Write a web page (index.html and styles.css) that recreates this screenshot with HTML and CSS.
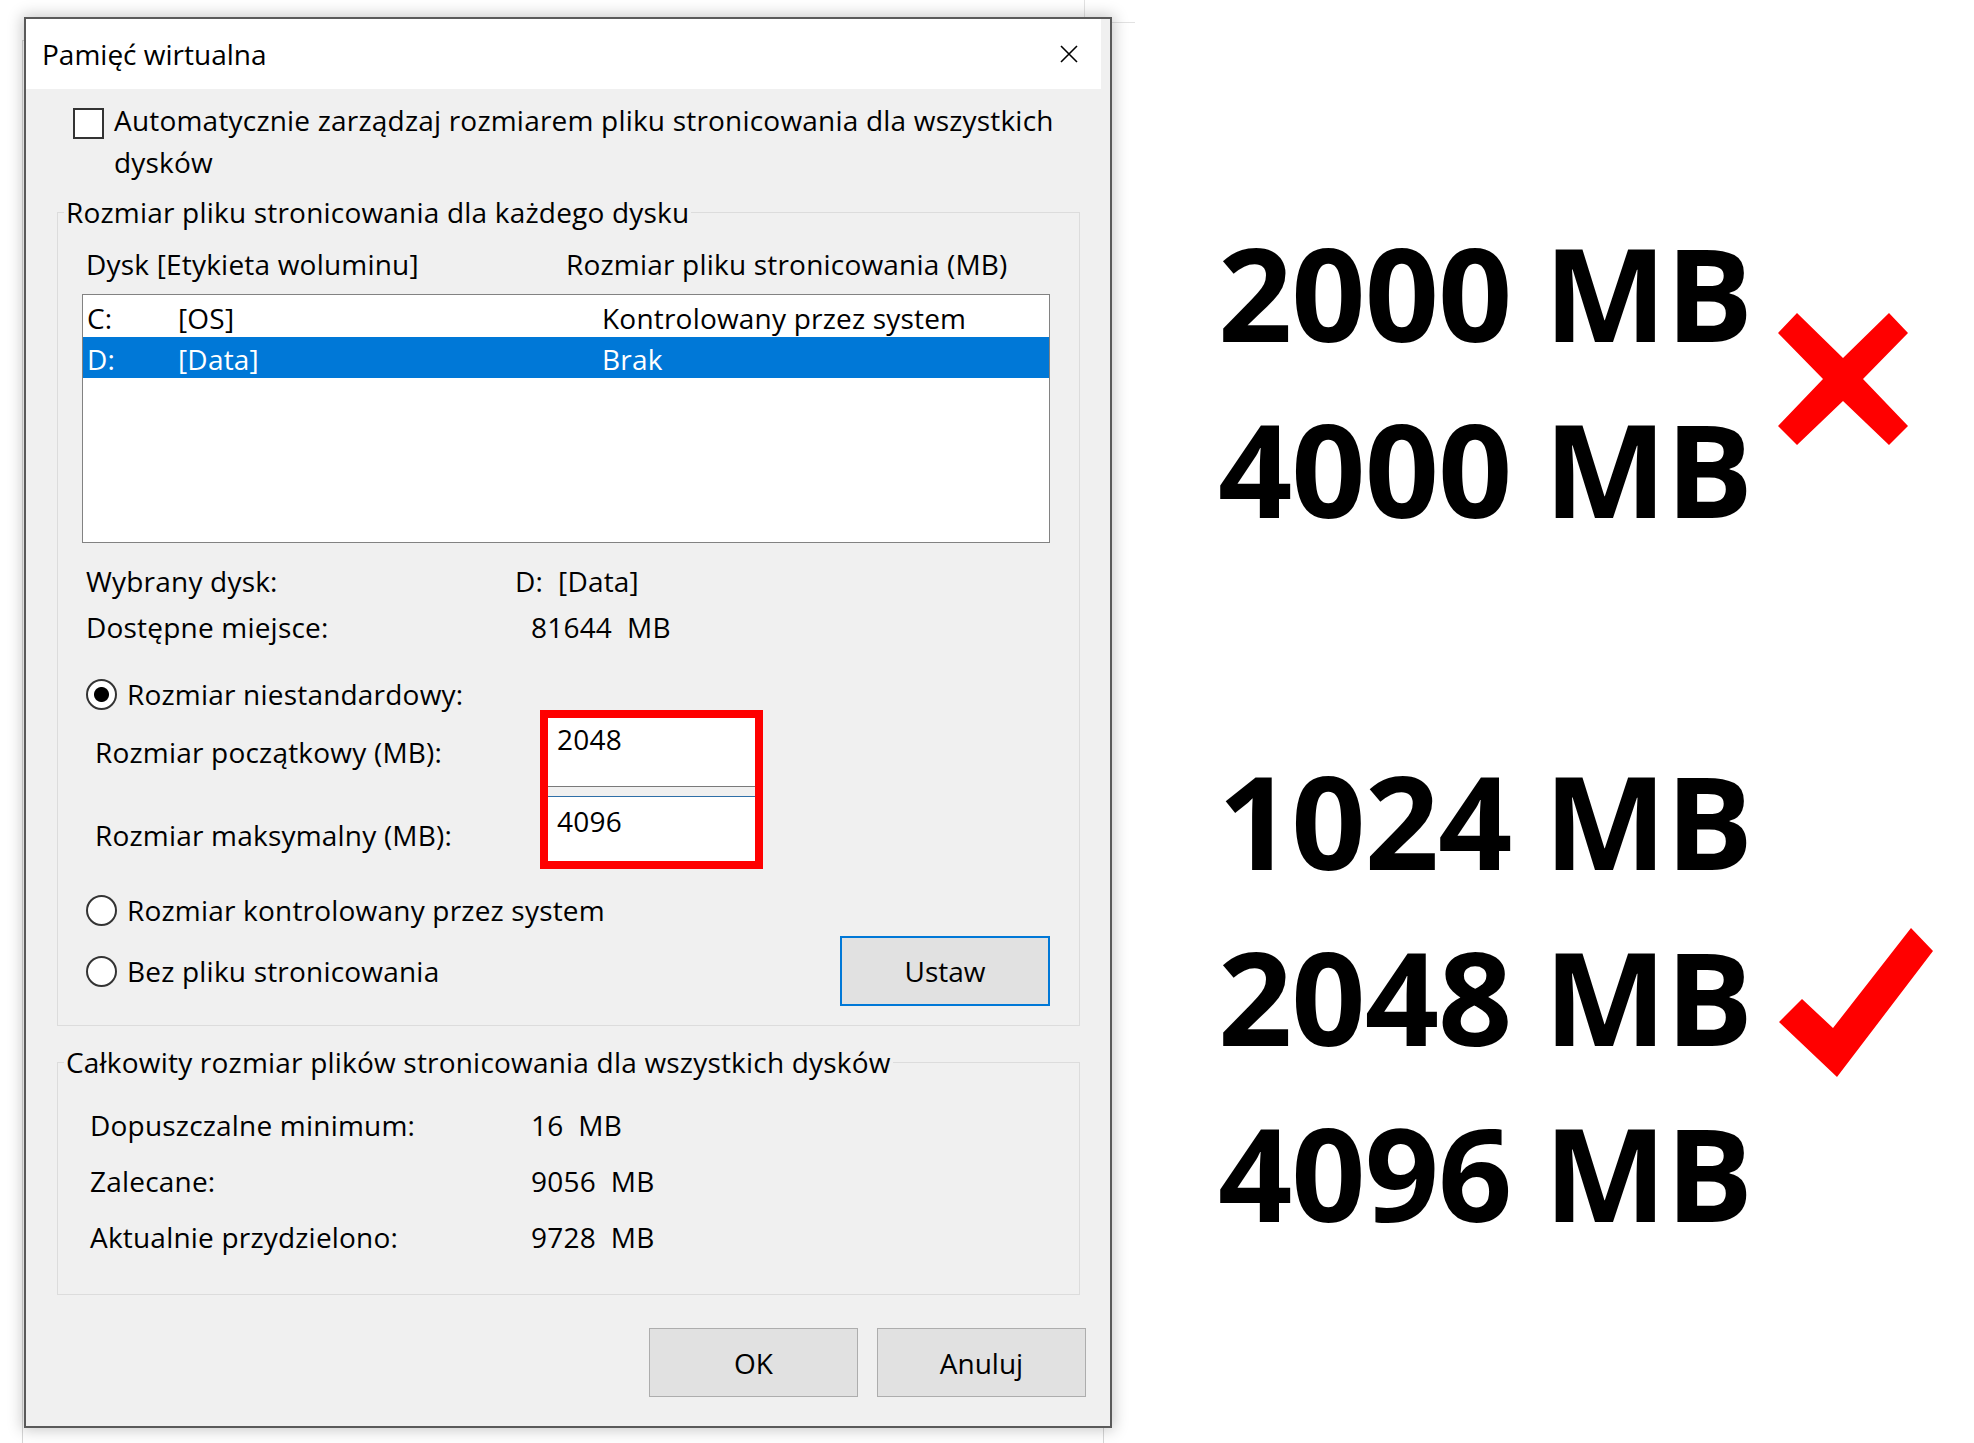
FILE: index.html
```html
<!DOCTYPE html>
<html lang="pl">
<head>
<meta charset="utf-8">
<title>Pamięć wirtualna</title>
<link rel="stylesheet" href="styles.css">
</head>
<body>
<div class="bgwin bgwin-top"></div>
<div class="bgwin bgwin-back"></div>
<main class="page">
  <section class="dialog">
    <header class="titlebar">
      <span class="title">Pamięć wirtualna</span>
      <svg class="close" viewBox="0 0 18 18" width="18" height="18"><path d="M1 1L17 17M17 1L1 17"/></svg>
    </header>
    <div class="dialog-body">
      <div class="auto-row">
        <span class="checkbox"></span>
        <span class="auto-text">Automatycznie zarządzaj rozmiarem pliku stronicowania dla wszystkich dysków</span>
      </div>

      <fieldset class="group group-drive">
        <legend>Rozmiar pliku stronicowania dla każdego dysku</legend>
        <div class="list-head"><span>Dysk [Etykieta woluminu]</span><span>Rozmiar pliku stronicowania (MB)</span></div>
        <div class="listbox">
          <div class="row"><span>C:</span><span>[OS]</span><span>Kontrolowany przez system</span></div>
          <div class="row selected"><span>D:</span><span>[Data]</span><span>Brak</span></div>
        </div>
        <div class="info">
          <span>Wybrany dysk:</span><span>D:&nbsp; [Data]</span>
          <span>Dostępne miejsce:</span><span class="shift">81644&nbsp; MB</span>
        </div>
        <div class="radio-row first-radio"><span class="radio checked"></span>Rozmiar niestandardowy:</div>
        <div class="custom">
          <div class="custom-labels">
            <span>Rozmiar początkowy (MB):</span>
            <span>Rozmiar maksymalny (MB):</span>
          </div>
          <div class="highlight">
            <div class="field field-initial">2048</div>
            <div class="field field-max">4096</div>
          </div>
        </div>
        <div class="radio-row second-radio"><span class="radio"></span>Rozmiar kontrolowany przez system</div>
        <div class="radio-row last-row"><span class="radio"></span>Bez pliku stronicowania<button class="btn btn-set">Ustaw</button></div>
      </fieldset>

      <fieldset class="group group-total">
        <legend>Całkowity rozmiar plików stronicowania dla wszystkich dysków</legend>
        <div class="totals">
          <span>Dopuszczalne minimum:</span><span>16&nbsp; MB</span>
          <span>Zalecane:</span><span>9056&nbsp; MB</span>
          <span>Aktualnie przydzielono:</span><span>9728&nbsp; MB</span>
        </div>
      </fieldset>

      <div class="actions">
        <button class="btn">OK</button>
        <button class="btn">Anuluj</button>
      </div>
    </div>
  </section>

  <section class="notes">
    <div class="note-lines">
      <div>2000 MB</div>
      <div>4000 MB</div>
      <div class="blank"></div>
      <div>1024 MB</div>
      <div>2048 MB</div>
      <div>4096 MB</div>
    </div>
    <div class="marks">
      <svg class="mark-x" viewBox="0 0 130 132" width="130" height="132"><polygon points="0,20 19,0 65,45 111,0 130,20 85,66 130,113 111,132 65,88 19,132 0,113 45,66"/></svg>
      <svg class="mark-ok" viewBox="0 0 154 149" width="154" height="149"><polygon points="0,94 23,71 54,100 132,0 154,23 58,149"/></svg>
    </div>
  </section>
</main>
</body>
</html>
```
FILE: styles.css
```css
* { box-sizing: border-box; }

html, body {
  margin: 0;
  background: #fff;
}

body {
  width: 1974px;
  height: 1443px;
  overflow: hidden;
  position: relative;
  font-family: "Open Sans", "Noto Sans", sans-serif;
  font-size: 28px;
  color: #000;
}

.bgwin {
  position: absolute;
  background: #fff;
}

.bgwin-top {
  left: 1084px;
  top: -2px;
  width: 51px;
  height: 25px;
  border-left: 1px solid #e2e2e2;
  border-bottom: 1px solid #e2e2e2;
}

.bgwin-back {
  left: 22px;
  top: 40px;
  width: 1082px;
  height: 1403px;
  border: 1px solid #d6d6d6;
  border-bottom: none;
}

.page {
  position: relative;
  z-index: 1;
  display: flex;
  align-items: flex-start;
}

/* ---------- dialog ---------- */
.dialog {
  margin: 17px 0 0 24px;
  width: 1088px;
  height: 1411px;
  background: #f0f0f0;
  border: 2px solid #5a5a5a;
  box-shadow: 0 0 14px 2px rgba(0, 0, 0, 0.22);
  display: flex;
  flex-direction: column;
  letter-spacing: 0.2px;
}

.titlebar {
  height: 70px;
  margin-right: 9px;
  background: #fff;
  display: flex;
  align-items: center;
  padding-left: 16px;
  padding-right: 23px;
}

.title {
  line-height: 40px;
  letter-spacing: 0;
}

.close {
  margin-left: auto;
  fill: none;
  stroke: #000;
  stroke-width: 1.6;
}

.dialog-body {
  display: flex;
  flex-direction: column;
}

.auto-row {
  display: flex;
  align-items: flex-start;
  margin: 10px 0 0 47px;
  line-height: 42px;
}

.checkbox {
  flex: none;
  width: 31px;
  height: 31px;
  margin: 9px 10px 0 0;
  border: 2px solid #333;
  background: #fff;
}

.auto-text {
  width: 980px;
}

/* ---------- group boxes ---------- */
.group {
  margin: 9px 0 0 31px;
  width: 1023px;
  padding: 0 0 19px 0;
  border: 1px solid #dcdcdc;
  min-width: 0;
}

.group legend {
  margin-left: 6px;
  padding: 0 2px;
  line-height: 40px;
}

.list-head {
  margin-top: 12px;
  padding-left: 28px;
  display: grid;
  grid-template-columns: 480px auto;
  line-height: 40px;
}

.listbox {
  margin: 10px 0 0 24px;
  width: 968px;
  height: 249px;
  border: 1px solid #828282;
  background: #fff;
  padding-top: 1px;
}

.row {
  display: grid;
  grid-template-columns: 91px 424px 1fr;
  padding-left: 4px;
  height: 41px;
  line-height: 44px;
  white-space: nowrap;
}

.row.selected {
  background: #0078d7;
  color: #fff;
}

.info {
  margin-top: 18px;
  padding-left: 28px;
  display: grid;
  grid-template-columns: 429px auto;
  row-gap: 6px;
  line-height: 40px;
}

.shift {
  margin-left: 16px;
}

.radio-row {
  display: flex;
  align-items: center;
  padding-left: 28px;
  line-height: 40px;
}

.radio {
  flex: none;
  width: 31px;
  height: 31px;
  margin-right: 10px;
  border: 2px solid #333;
  border-radius: 50%;
  background: #fff;
}

.radio.checked {
  background: radial-gradient(circle, #000 0 7px, #fff 8px);
}

.first-radio { margin-top: 27px; }
.second-radio { margin-top: 21px; }

.custom {
  display: flex;
  margin-top: -4px;
}

.custom-labels {
  width: 482px;
  padding: 22px 0 0 37px;
  display: flex;
  flex-direction: column;
  gap: 43px;
  line-height: 40px;
}

.highlight {
  width: 223px;
  height: 159px;
  border: 8px solid #fe0000;
  background: #f0f0f0;
  display: flex;
  flex-direction: column;
}

.field {
  background: #fff;
  padding-left: 9px;
  line-height: 40px;
}

.field-initial {
  height: 69px;
  padding-top: 1px;
  border-bottom: 1px solid #7a7a7a;
}

.field-max {
  flex: 1;
  margin-top: 9px;
  padding-top: 4px;
  border-top: 1px solid #2f6fa8;
}

.last-row {
  margin-top: 6px;
  height: 70px;
}

.btn {
  font: inherit;
  color: #000;
  background: #e1e1e1;
  border: 1px solid #adadad;
  width: 209px;
  height: 69px;
  padding: 0;
  line-height: 40px;
}

.btn-set {
  margin: 0 29px 0 auto;
  width: 210px;
  height: 70px;
  border: 2px solid #0078d7;
}

.group-total {
  margin-top: 16px;
  padding-bottom: 37px;
}

.totals {
  margin-top: 23px;
  padding-left: 32px;
  display: grid;
  grid-template-columns: 441px auto;
  row-gap: 16px;
  line-height: 40px;
}

.actions {
  margin-top: 33px;
  padding-right: 24px;
  display: flex;
  justify-content: flex-end;
  gap: 19px;
}

/* ---------- right-hand notes ---------- */
.notes {
  margin-left: 106px;
  padding-top: 204px;
  display: flex;
}

.note-lines {
  width: 560px;
  font-family: "Open Sans", "Noto Sans", sans-serif;
  font-weight: 700;
  font-size: 130px;
  line-height: 176px;
  letter-spacing: -1px;
  white-space: nowrap;
}

.blank {
  height: 176px;
}

.marks {
  display: flex;
  flex-direction: column;
  align-items: flex-start;
}

.marks svg {
  display: block;
  fill: #ff0000;
}

.mark-x {
  margin-top: 109px;
}

.mark-ok {
  margin: 483px 0 0 1px;
}
```
